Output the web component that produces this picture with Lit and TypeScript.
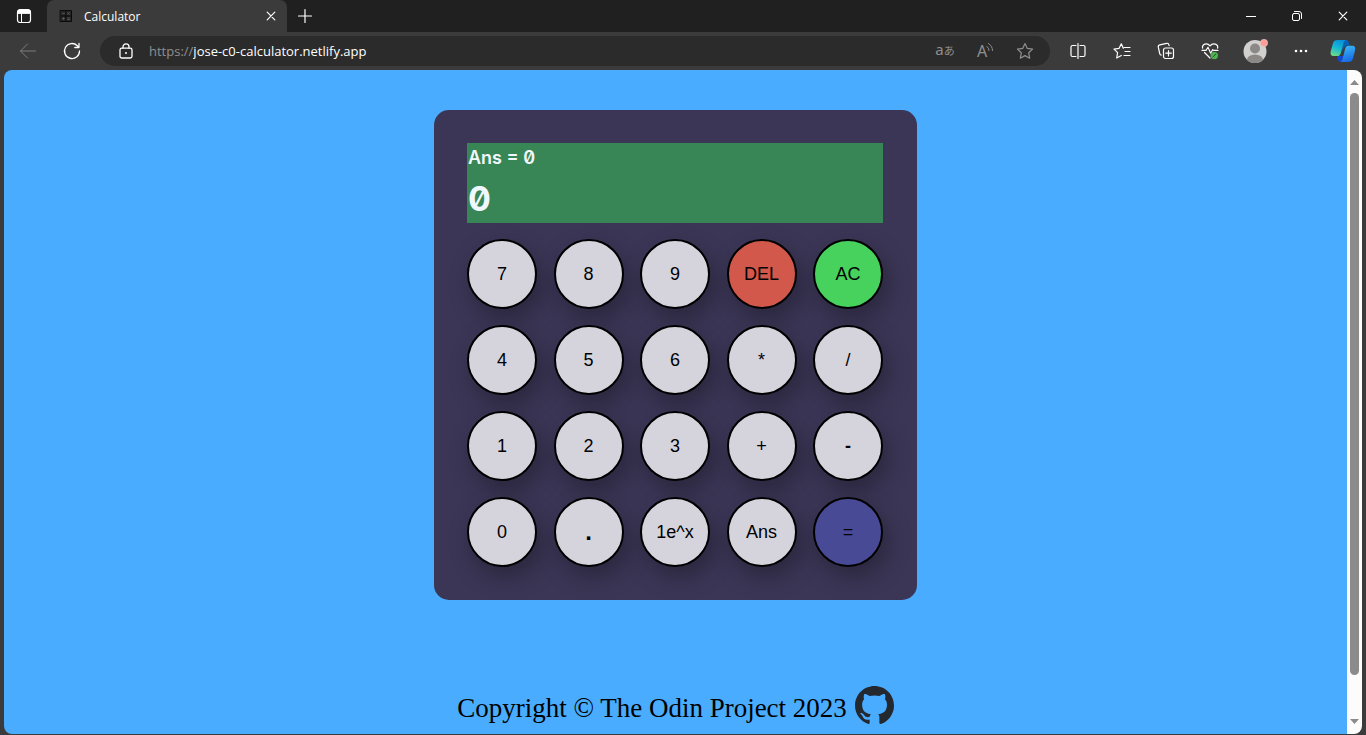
import { LitElement, html, css, svg } from "lit";
import { customElement, state } from "lit/decorators.js";
import { classMap } from "lit/directives/class-map.js";

const icon = (size: number, body: unknown) => html`<svg
  width=${size}
  height=${size}
  viewBox="0 0 ${size} ${size}"
  fill="none"
  stroke="currentColor"
  stroke-linecap="round"
  stroke-linejoin="round"
  aria-hidden="true"
>${body}</svg>`;

const icons = {
  workspace: icon(16, svg`<rect x="1.5" y="2" width="13" height="12.5" rx="2.5" stroke-width="1.2"/><path d="M1.5 5V4a2.500 2.500 0 0 1 2.500-2.500h8a2.500 2.500 0 0 1 2.500 2.500v1z" fill="currentColor"/><path d="M5.500 5v9"/>`),
  favicon: icon(12, svg`<rect x="0.500" y="0.500" width="11" height="11" fill="#262626" stroke="#0b0b0b"/><path d="M6 1v10M1 6h10" stroke="#0b0b0b"/><path d="M2.500 3.500h2M7.500 2.500l2 2m0-2l-2 2M2.500 8.500h2m-1-1v2M7.500 8h2m-2 1.500h2" stroke="#6b6b6b" stroke-width="0.600"/>`),
  close: icon(10, svg`<path d="M1.200 1.200l7.600 7.600m0-7.600L1.200 8.800" stroke-width="1.200"/>`),
  plus: icon(14, svg`<path d="M7 .5v13M.5 7h13" stroke-width="1.200"/>`),
  minimize: icon(12, svg`<path d="M1 6.500h10" stroke-linecap="butt"/>`),
  restore: icon(12, svg`<rect x="1.500" y="3.500" width="7" height="7" rx="1.500"/><path d="M3.500 1.500h4.500a2.500 2.500 0 0 1 2.500 2.500v4.500"/>`),
  back: icon(18, svg`<path d="M16.500 9H1.500M8.500 2l-7 7 7 7"/>`),
  refresh: icon(18, svg`<path d="M16.500 9a7.500 7.500 0 1 1-2.200-5.300L16 5.400M16 1.300v4.200h-4.200" stroke-width="1.300"/>`),
  lock: icon(16, svg`<rect x="2" y="5.200" width="12" height="9.800" rx="1.800" stroke-width="1.300"/><path d="M5 5V3.800a3 3 0 0 1 6 0V5" stroke-width="1.300"/><circle cx="8" cy="10" r="1" fill="currentColor" stroke="none"/>`),
  star: icon(18, svg`<path d="M9 1.500l2.300 4.900 5.300.7-3.900 3.700 1 5.400L9 13.600l-4.700 2.600 1-5.400L1.400 7.100l5.300-.7z" stroke-width="1.200"/>`),
  split: icon(16, svg`<path d="M6 2.500H2.500a1.500 1.500 0 0 0-1.500 1.500v8a1.500 1.500 0 0 0 1.500 1.500H6M10 2.500h3.500A1.500 1.500 0 0 1 15 4v8a1.500 1.500 0 0 1-1.500 1.500H10M8 .5v15" stroke-width="1.200"/>`),
  favorites: icon(18, svg`<path d="M11 5.500h6M12 9.500h5M11 13.500h6" stroke-width="1.200"/><path d="M10.300 6.300L8.300 1.800 6 6.400l-5 .7 3.600 3.500-.9 5.400 4.600-2.500" stroke-width="1.200"/>`),
  collections: icon(18, svg`<rect x="6.500" y="6" width="10" height="10.500" rx="2" stroke-width="1.200"/><path d="M11.500 8.500v5.500M8.800 11.200h5.500" stroke-width="1.200"/><path d="M4.200 13.200A2 2 0 0 1 2.700 11.500L1.300 5.200a2 2 0 0 1 1.500-2.300l6.700-1.600a2 2 0 0 1 2.400 1.500l.2.900" stroke-width="1.200"/>`),
  health: icon(18, svg`<path d="M1.600 6.200C.8 2 6 .2 9 3.800 12 .2 17.600 2 16.600 6.200M3.500 10.500L9 16" stroke-width="1.200"/><path d="M1 8.400h4l2-3.200 2.700 6 2-3.600.8.800H17" stroke-width="1.100"/><circle cx="13.300" cy="13.600" r="3.700" fill="#4fb352" stroke="none"/><path d="M11.900 14.800l2.800-2.600" stroke="#244c26"/>`),
  profile: html`<svg width="26" height="26" viewBox="0 0 26 26" aria-hidden="true">
    <defs><clipPath id="face"><circle cx="13" cy="13.500" r="11.500"/></clipPath></defs>
    <circle cx="13" cy="13.500" r="11.500" fill="#d2d0ce"/>
    <g clip-path="url(#face)" fill="#8b8886"><circle cx="13" cy="10.500" r="5"/><ellipse cx="13" cy="22" rx="8" ry="5.500"/></g>
    <circle cx="22" cy="5" r="3.700" fill="#ff9c96" stroke="#dcd5d3" stroke-width="0.500"/>
  </svg>`,
  more: icon(16, svg`<g fill="currentColor" stroke="none"><circle cx="3" cy="8" r="1.300"/><circle cx="8" cy="8" r="1.300"/><circle cx="13" cy="8" r="1.300"/></g>`),
  copilot: html`<svg width="26" height="24" viewBox="0 0 26 24" aria-hidden="true">
    <defs>
      <linearGradient id="left" x1="0.600" y1="0" x2="0.200" y2="1"><stop offset="0" stop-color="#0791d8"/><stop offset="0.500" stop-color="#19b9d2"/><stop offset="1" stop-color="#71df83"/></linearGradient>
      <linearGradient id="right" x1="0.300" y1="0" x2="0.600" y2="1"><stop offset="0" stop-color="#38b9f5"/><stop offset="1" stop-color="#1867e4"/></linearGradient>
    </defs>
    <path d="M13 1h3c2 0 2.500 1 3 3l.7 2.500h-4L12 12z" fill="#0762b5"/>
    <path d="M7 17h7l-2 5c-.5 1-1.500 1-2.500.6C7.800 22 7.400 19.500 7 17z" fill="#1546d2"/>
    <path d="M7.500 1H16c-1.700.5-2.200 2-2.700 4L11 13.500c-.7 2.500-1.500 3.600-4 3.600H4c-3 0-4-1.800-3.200-5L3 4.300C3.600 2 5 1 7.500 1z" fill="url(#left)"/>
    <path d="M18.500 6.700H22c3 0 3.700 2 3 4.800l-2 7.700c-.6 2.500-2 3.800-4.500 3.800H10c1.600-.4 2.200-1.800 2.700-3.600l2.200-8.700c.6-2.600 1.300-4 3.600-4z" fill="url(#right)"/>
  </svg>`,
  github: html`<svg width="39" height="39" viewBox="0 0 16 16" fill="#24292f" aria-hidden="true"><path d="M8 0C3.580 0 0 3.580 0 8c0 3.540 2.290 6.530 5.470 7.590.4.070.55-.17.55-.38 0-.19-.01-.82-.01-1.490-2.010.37-2.530-.49-2.690-.94-.09-.23-.48-.94-.82-1.130-.28-.15-.68-.52-.01-.53.63-.01 1.080.58 1.230.82.72 1.210 1.870.87 2.330.66.07-.52.28-.87.51-1.070-1.780-.2-3.640-.89-3.640-3.950 0-.87.31-1.590.82-2.150-.08-.2-.36-1.020.08-2.120 0 0 .67-.21 2.200.82.64-.18 1.320-.27 2-.27.68 0 1.360.09 2 .27 1.530-1.040 2.200-.82 2.200-.82.44 1.100.16 1.920.08 2.120.51.56.82 1.270.82 2.150 0 3.070-1.870 3.750-3.650 3.950.29.25.54.73.54 1.480 0 1.070-.01 1.930-.01 2.200 0 .21.15.46.55.38A8.012 8.012 0 0 0 16 8c0-4.420-3.580-8-8-8z"/></svg>`,
};

const resetControls = css`
  * { box-sizing: border-box; }
  button, input {
    margin: 0;
    padding: 0;
    border: 0;
    background: none;
    color: inherit;
    font: inherit;
  }
  svg { display: block; flex: none; overflow: visible; }
`;

@customElement("browser-chrome")
class BrowserChrome extends LitElement {
  static styles = [
    resetControls,
    css`
      :host {
        display: block;
        flex: none;
        color: #fff;
        background: #3b3b3b;
        font-family: "Open Sans", "Noto Sans", sans-serif;
        font-size: 12px;
      }
      .strip { display: flex; height: 32px; background: #202020; }
      .icon { display: flex; align-items: center; justify-content: center; width: 44px; height: 32px; }
      .workspace { width: 47px; }
      .tab {
        display: flex;
        align-items: center;
        width: 240px;
        padding: 0 10px 0 13px;
        border-radius: 7px 7px 0 0;
        background: #3b3b3b;
      }
      .title { flex: 1; padding-left: 12px; }
      .small { width: 12px; height: 12px; }
      .new { width: 35px; }
      .window { display: flex; margin-left: auto; }
      .window .icon, .wide { width: 46px; }
      .bar { display: flex; align-items: center; height: 38px; padding: 0 4px 0 6px; }
      .dim { color: #7d7d7d; }
      .address {
        display: flex;
        flex: 1;
        align-items: center;
        min-width: 0;
        height: 30px;
        margin: 0 6px;
        padding: 0 5px 0 18px;
        border-radius: 15px;
        background: #2b2b2b;
        font-size: 13px;
      }
      .scheme { padding-left: 15px; color: #8f8f8f; }
      .url { flex: 1; min-width: 0; outline: none; }
      .address .icon { width: 40px; color: #8f8f8f; }
      .address .translate { align-items: baseline; height: 24px; font: 15px/20px "Noto Sans", "Noto Sans CJK JP", sans-serif; }
      .kana { font-size: 11px; }
      .letter { font: 16px "Noto Sans", sans-serif; fill: currentColor; stroke: none; }
      .copilot { width: 38px; }
    `,
  ];

  render() {
    return html`
      <div class="strip">
        <button class="icon workspace" aria-label="Tab actions">${icons.workspace}</button>
        <div class="tab">
          ${icons.favicon}<span class="title">Calculator</span>
          <button class="icon small" aria-label="Close tab">${icons.close}</button>
        </div>
        <button class="icon new" aria-label="New tab">${icons.plus}</button>
        <div class="window">
          <button class="icon" aria-label="Minimize">${icons.minimize}</button>
          <button class="icon" aria-label="Restore">${icons.restore}</button>
          <button class="icon" aria-label="Close">${icons.close}</button>
        </div>
      </div>
      <div class="bar">
        <button class="icon dim" aria-label="Back">${icons.back}</button>
        <button class="icon" aria-label="Refresh">${icons.refresh}</button>
        <div class="address">
          ${icons.lock}
          <label class="scheme" for="url">https://</label>
          <input class="url" id="url" value="jose-c0-calculator.netlify.app" />
          <button class="icon translate" aria-label="Translate">a<span class="kana">あ</span></button>
          <button class="icon" aria-label="Read aloud">
            ${icon(18, svg`<text class="letter" x="1" y="15">A</text><path d="M11 4.500q2 1.500 2 4M12.500 1.500q4 2.500 4 7"/>`)}
          </button>
          <button class="icon" aria-label="Add to favorites">${icons.star}</button>
        </div>
        <button class="icon" aria-label="Split screen">${icons.split}</button>
        <button class="icon" aria-label="Favorites">${icons.favorites}</button>
        <button class="icon" aria-label="Collections">${icons.collections}</button>
        <button class="icon" aria-label="Browser essentials">${icons.health}</button>
        <button class="icon wide" aria-label="Profile">${icons.profile}</button>
        <button class="icon wide" aria-label="Settings">${icons.more}</button>
        <button class="icon copilot" aria-label="Copilot">${icons.copilot}</button>
      </div>
    `;
  }
}

const KEYS = [
  "7", "8", "9", "DEL", "AC",
  "4", "5", "6", "*", "/",
  "1", "2", "3", "+", "-",
  "0", ".", "1e^x", "Ans", "=",
];

@customElement("calculator-pad")
class CalculatorPad extends LitElement {
  static styles = [
    resetControls,
    css`
      :host {
        display: block;
        box-sizing: border-box;
        width: 483px;
        max-width: 100%;
        padding: 33px 34px 33px 33px;
        border-radius: 15px;
        background: #3b3656;
      }
      .screen {
        display: flex;
        flex-direction: column;
        height: 80px;
        margin-bottom: 16px;
        padding-left: 1px;
        background: #388555;
        color: #f0f8ff;
        font-family: Inter, "DejaVu Sans", sans-serif;
        font-variant-numeric: slashed-zero;
      }
      .previous { font-size: 18px; font-weight: 600; line-height: 30px; }
      .current { font-size: 34px; font-weight: 700; line-height: 52px; }
      .keys {
        display: grid;
        grid-template-columns: repeat(5, 70px);
        justify-content: space-between;
        gap: 16px 0;
      }
      .key {
        height: 70px;
        border: 2px solid #000;
        border-radius: 50%;
        background: #d5d4dd;
        box-shadow: 5px 10px 25px rgba(0, 0, 0, 0.3);
        color: #000;
        font: 18px "Liberation Sans", Arial, sans-serif;
      }
      .strong { font-weight: 700; }
      .point { font-size: 24px; }
      .delete { background: #d2584b; }
      .clear { background: #46d25c; }
      .equals { background: #484a96; }
    `,
  ];

  @state() private entry = "0";
  @state() private answer = "0";

  private press(key: string) {
    if (key === "AC") {
      this.entry = "0";
      this.answer = "0";
    } else if (key === "DEL") {
      this.entry = this.entry.slice(0, -1) || "0";
    } else if (key === "=") {
      this.evaluate();
    } else {
      const text = key === "Ans" ? this.answer : key === "1e^x" ? "e" : key;
      this.entry = this.entry === "0" && /^\d/.test(text) ? text : this.entry + text;
    }
  }

  private evaluate() {
    const parts = this.entry.match(/^(-?[\d.]+(?:e-?\d+)?)([*/+-])(-?[\d.]+(?:e-?\d+)?)$/);
    if (!parts) return;
    const a = Number(parts[1]);
    const b = Number(parts[3]);
    const results: Record<string, number> = { "*": a * b, "/": a / b, "+": a + b, "-": a - b };
    this.entry = this.answer = String(results[parts[2]]);
  }

  render() {
    return html`
      <div class="screen">
        <output class="previous">Ans = ${this.answer}</output>
        <output class="current">${this.entry}</output>
      </div>
      <div class="keys">
        ${KEYS.map(
          (key) => html`<button
            class=${classMap({
              key: true,
              strong: key === "." || key === "-",
              point: key === ".",
              delete: key === "DEL",
              clear: key === "AC",
              equals: key === "=",
            })}
            @click=${() => this.press(key)}
          >${key}</button>`
        )}
      </div>
    `;
  }
}

@customElement("app-root")
class AppRoot extends LitElement {
  static styles = css`
    :host {
      display: flex;
      flex-direction: column;
      min-height: 100vh;
      background: #3b3b3b;
    }
    .frame { display: flex; flex: 1; padding: 0 4px 1px; }
    .page {
      display: flex;
      flex: 1;
      flex-direction: column;
      align-items: center;
      min-width: 0;
      padding: 40px 0 9px;
      border-radius: 8px 0 0 8px;
      background: #49acff;
    }
    .footer {
      display: flex;
      align-items: center;
      gap: 8px;
      margin-top: auto;
      padding-top: 40px;
      color: #000;
      font: 27px/39px "Liberation Serif", "Times New Roman", serif;
    }
    .copyright { padding-top: 6px; line-height: 33px; }
    .github { display: block; }
    .github svg { display: block; }
    .scroll {
      display: flex;
      flex-direction: column;
      align-items: center;
      width: 15px;
      padding: 10px 0 10px;
      box-sizing: border-box;
      border-radius: 0 8px 8px 0;
      background: #fcfcfc;
    }
    .scroll svg { display: block; }
    .track { flex: 1; padding: 8px 0 0; display: flex; flex-direction: column; }
    .thumb { width: 9px; height: 93%; border-radius: 5px; background: #8b8b8b; }
  `;

  render() {
    return html`
      <browser-chrome></browser-chrome>
      <div class="frame">
        <main class="page">
          <calculator-pad></calculator-pad>
          <footer class="footer">
            <span class="copyright">Copyright © The Odin Project 2023</span>
            <a class="github" href="#" aria-label="GitHub">${icons.github}</a>
          </footer>
        </main>
        <div class="scroll" aria-hidden="true">
          <svg width="9" height="5" viewBox="0 0 9 5" fill="#8b8b8b"><path d="M4.500 0L9 5H0z"/></svg>
          <div class="track"><div class="thumb"></div></div>
          <svg width="9" height="5" viewBox="0 0 9 5" fill="#8b8b8b"><path d="M0 0h9L4.500 5z"/></svg>
        </div>
      </div>
    `;
  }
}
